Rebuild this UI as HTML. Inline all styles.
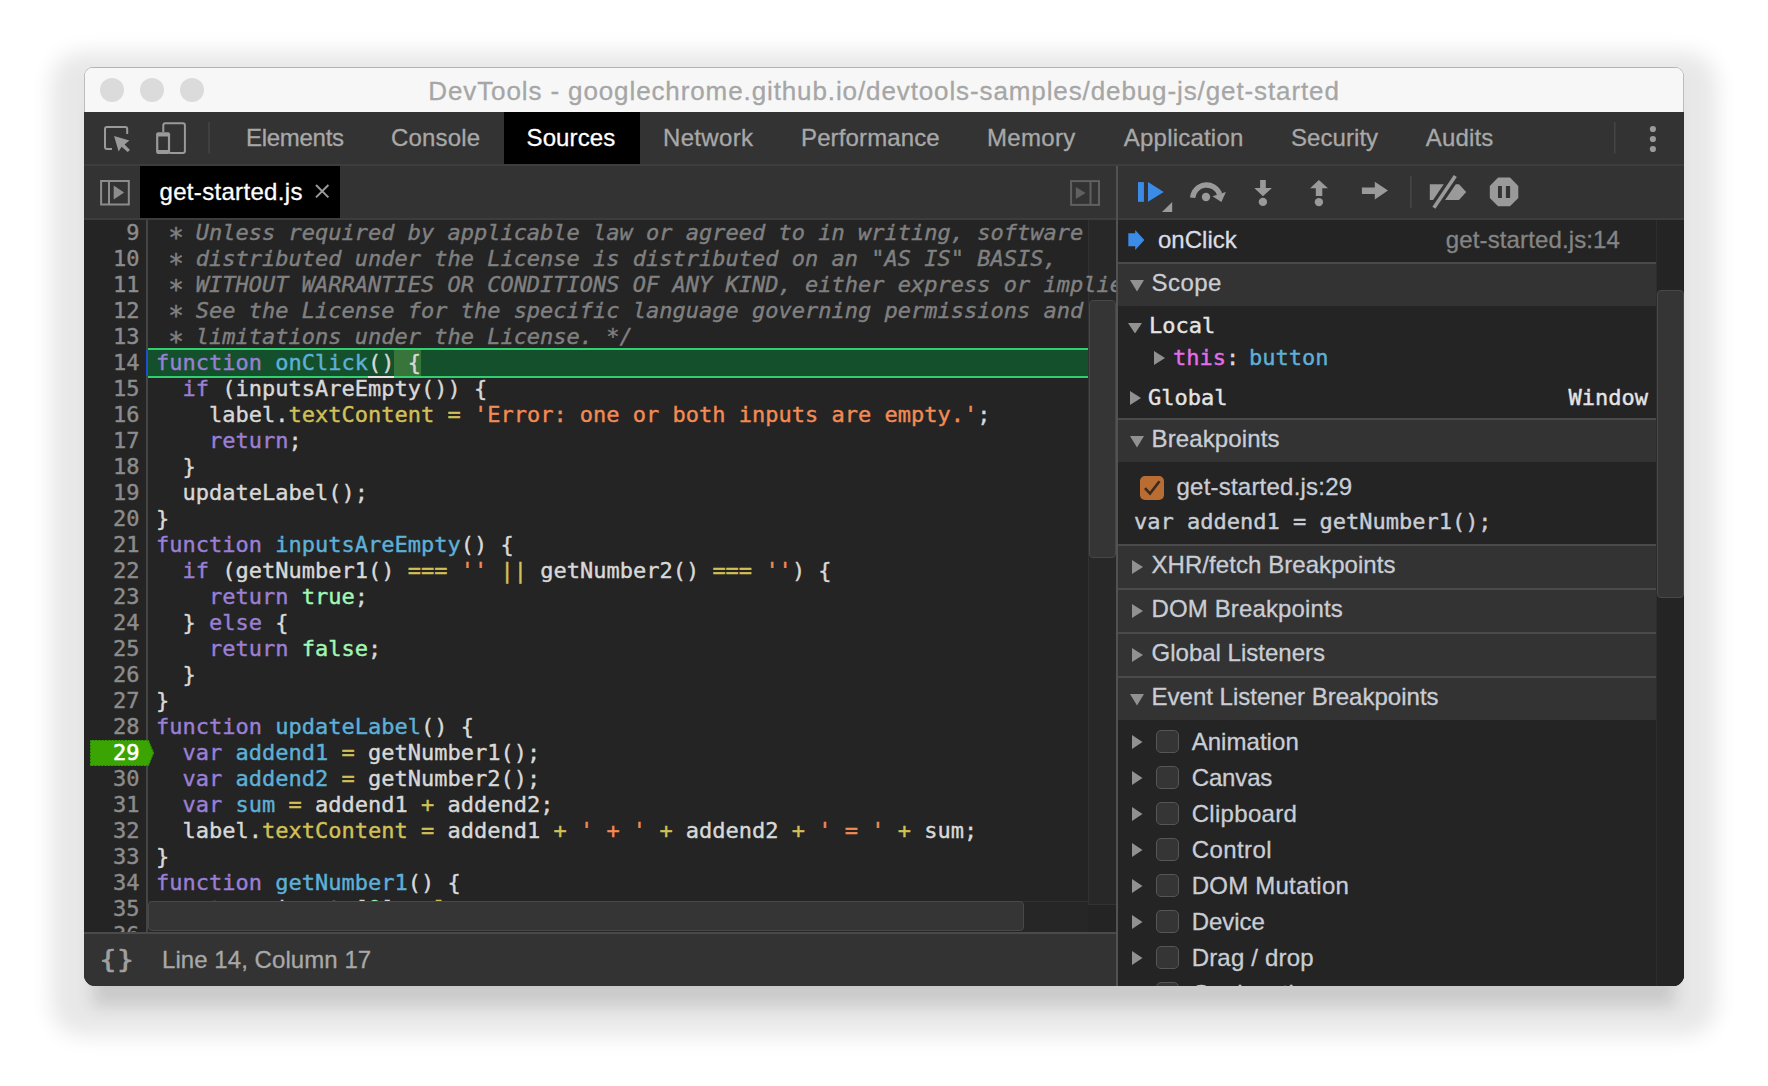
<!DOCTYPE html>
<html lang="en">
<head>
<meta charset="utf-8">
<title>DevTools - googlechrome.github.io/devtools-samples/debug-js/get-started</title>
<style>
html,body{margin:0;padding:0;}
body{width:1768px;height:1086px;background:#fff;position:relative;overflow:hidden;font-family:"Liberation Sans",sans-serif;}
#bg{position:absolute;left:0;top:0;width:1768px;height:1086px;background:#fff;}
#win{position:absolute;left:84px;top:67px;width:1600px;height:919px;border-radius:10px 10px 11px 11px;overflow:hidden;background:#242424;}
#shadow{position:absolute;left:84px;top:68px;width:1600px;height:918px;border-radius:10px;box-shadow:0 17px 21px 33px rgba(0,0,0,0.096),0 29px 16px -9.5px rgba(0,0,0,0.126);}
#in{position:absolute;left:-84px;top:-67px;width:1768px;height:1086px;}
#in div,#in span,#in svg{position:absolute;}
#in .t{white-space:pre;}
#in .t span{position:static;}
.sans{font-family:"Liberation Sans",sans-serif;font-size:24px;line-height:30px;-webkit-text-stroke:0.3px currentColor;}
.mono{font-family:"DejaVu Sans Mono","Liberation Mono",monospace;font-size:22px;line-height:26px;-webkit-text-stroke:0.4px currentColor;}
.ast{display:inline-block;transform:translate(0.4px,5.6px) scale(1.18);font-style:normal;}
/* title bar */
#title{left:84px;top:67px;width:1600px;height:45px;background:#f7f7f7;box-shadow:inset 0 1px 0 #b4b4b4,inset 1px 0 0 #bcbcbc,inset -1px 0 0 #bcbcbc;}
#title .txt{left:0;width:1600px;top:8px;text-align:center;color:#a6a6a6;font-size:26px;line-height:32px;white-space:pre;letter-spacing:0.89px;-webkit-text-stroke:0.3px #a6a6a6;}
.tl{width:24px;height:24px;border-radius:50%;background:#dbdbdb;top:11px;}
/* tab bar */
#tabs{left:84px;top:112px;width:1600px;height:52px;background:#333;}
#tabs .tab{top:0;height:52px;color:#a8a8a8;white-space:pre;line-height:52px;font-size:24px;-webkit-text-stroke:0.3px currentColor;}
#tabs .sel{background:#000;color:#fff;}
#tabline{left:84px;top:164px;width:1600px;height:2px;background:#3d3d3d;}
/* sources toolbar */
#stb{left:84px;top:166px;width:1033px;height:52px;background:#333;}
#stbline{left:84px;top:218px;width:1033px;height:2px;background:#3d3d3d;}
#ftab{left:140px;top:166px;width:200px;height:52px;background:#000;}
/* code */
#code{left:84px;top:220px;width:1033px;height:712px;background:#242424;overflow:hidden;}
#codein{left:-84px;top:-220px;width:1768px;height:1086px;}
#gutsep{left:146px;top:220px;width:2px;height:712px;background:#454545;}
.ln{left:84px;width:55.5px;text-align:right;color:#8c8c8c;height:26px;white-space:pre;}
.cl{left:156px;height:26px;white-space:pre;color:#d8d8d8;}
.cl span{position:static !important;}
.c{color:#808080;font-style:italic;}
.k{color:#9a7fd5;}
.d{color:#5db0d7;}
.p{color:#d2c057;}
.s{color:#f28b54;}
.a{color:#a1f7b5;}
#exec{left:148px;top:348px;width:940px;height:26px;background:#14502b;border-top:2px solid #31cf70;border-bottom:2px solid #31cf70;}
#exechl{left:394px;top:350px;width:26.5px;height:26px;background:#38753a;}
#execul{left:368px;top:376px;width:26px;height:2px;background:#e4e4e4;}
#execbar{left:146px;top:350px;width:2px;height:26px;background:#1d50cf;}
.bpn{color:#fff !important;-webkit-text-stroke:0.6px #fff;}
#vtrack{left:1088px;top:220px;width:28px;height:684px;background:rgba(255,255,255,0.02);border-left:1px solid rgba(255,255,255,0.05);box-sizing:border-box;}
#vthumb{left:1088.5px;top:300px;width:27px;height:258px;background:#353535;border:1.5px solid #474747;border-radius:4px;box-sizing:border-box;}
#htrack{left:148px;top:901px;width:940px;height:31px;background:#262626;border-top:1px solid #303030;box-sizing:border-box;}
#hthumb{left:148px;top:901px;width:876px;height:30px;background:#353535;border:1.5px solid #484848;border-radius:4px;box-sizing:border-box;}
#corner{left:1088px;top:904px;width:28px;height:28px;background:#242424;border-top:1px solid #333;box-sizing:border-box;}
#rtrack{left:1656px;top:220px;width:28px;height:766px;background:#242424;border-left:1px solid #2e2e2e;box-sizing:border-box;}
#rthumb{left:1656.5px;top:290px;width:27px;height:308px;background:#353535;border:1.5px solid #484848;border-radius:4px;box-sizing:border-box;}
/* status bar */
#status{left:84px;top:932px;width:1033px;height:54px;background:#333;border-top:2px solid #4a4a4a;box-sizing:border-box;}
/* right */
#rdiv{left:1116px;top:166px;width:2px;height:820px;background:#525252;}
#right{left:1118px;top:220px;width:566px;height:766px;background:#242424;overflow:hidden;}
#rightin{left:-1118px;top:-220px;width:1768px;height:1086px;}
#dtb{left:1118px;top:166px;width:566px;height:52px;background:#333;}
#dtbline{left:1118px;top:218px;width:566px;height:2px;background:#3d3d3d;}
.hdr{left:1118px;width:538px;height:42px;background:#333;}
.hline{left:1118px;width:538px;height:2px;background:#444;}
.cb{width:21px;height:21px;border:1.5px solid #565656;border-radius:5px;background:#353535;}
</style>
</head>
<body>
<div id="bg"></div>
<div id="shadow"></div>
<div id="win"><div id="in">

<!-- TITLE -->
<div id="title">
  <div class="tl" style="left:16px"></div><div class="tl" style="left:56px"></div><div class="tl" style="left:96px"></div>
  <div class="txt">DevTools - googlechrome.github.io/devtools-samples/debug-js/get-started</div>
</div>

<!-- TABS -->
<div id="tabs">
  <div class="tab" style="left:162px;letter-spacing:-0.29px">Elements</div>
  <div class="tab" style="left:307px;letter-spacing:0.18px">Console</div>
  <div class="tab sel" style="left:420px;width:136px"></div>
  <div class="tab" style="left:442.5px;letter-spacing:0.13px;color:#fff">Sources</div>
  <div class="tab" style="left:579px;letter-spacing:0.32px">Network</div>
  <div class="tab" style="left:717px;letter-spacing:0.13px">Performance</div>
  <div class="tab" style="left:903px;letter-spacing:0.34px">Memory</div>
  <div class="tab" style="left:1039.8px;letter-spacing:0.21px">Application</div>
  <div class="tab" style="left:1207px;letter-spacing:0.06px">Security</div>
  <div class="tab" style="left:1341.8px;letter-spacing:0.16px">Audits</div>
</div>
<div id="tabline"></div>

<!-- SOURCES TOOLBAR -->
<div id="stb"></div>
<div id="stbline"></div>
<div id="ftab"><div class="t sans" style="left:19.5px;top:11px;color:#fff;letter-spacing:0.32px;-webkit-text-stroke:0.3px #fff">get-started.js</div></div>

<!-- CODE -->
<div id="code"><div id="codein">
<div id="gutsep"></div>
<div id="exec"></div>
<div id="exechl"></div>
<div id="execul"></div>
<div id="execbar"></div>
<svg style="left:88px;top:738px" width="70" height="30" viewBox="88 738 70 30"><path d="M90 740H148.6L154 753L148.6 766H90Z" fill="#3aa502"/><path d="M90.5 740.5H148.3L153.5 753L148.3 765.5H90.5Z" fill="none" stroke="#1f6a0a" stroke-width="1" stroke-dasharray="1.3 2"/></svg>
<div class="ln mono" style="top:220px">9</div>
<div class="cl mono" style="top:220px"><span class="c"> <span class="ast">*</span> Unless required by applicable law or agreed to in writing, software</span></div>
<div class="ln mono" style="top:246px">10</div>
<div class="cl mono" style="top:246px"><span class="c"> <span class="ast">*</span> distributed under the License is distributed on an "AS IS" BASIS,</span></div>
<div class="ln mono" style="top:272px">11</div>
<div class="cl mono" style="top:272px"><span class="c"> <span class="ast">*</span> WITHOUT WARRANTIES OR CONDITIONS OF ANY KIND, either express or implied.</span></div>
<div class="ln mono" style="top:298px">12</div>
<div class="cl mono" style="top:298px"><span class="c"> <span class="ast">*</span> See the License for the specific language governing permissions and</span></div>
<div class="ln mono" style="top:324px">13</div>
<div class="cl mono" style="top:324px"><span class="c"> <span class="ast">*</span> limitations under the License. */</span></div>
<div class="ln mono" style="top:350px">14</div>
<div class="cl mono" style="top:350px"><span class="k">function</span> <span class="d">onClick</span>() {</div>
<div class="ln mono" style="top:376px">15</div>
<div class="cl mono" style="top:376px">  <span class="k">if</span> (inputsAreEmpty()) {</div>
<div class="ln mono" style="top:402px">16</div>
<div class="cl mono" style="top:402px">    label.<span class="p">textContent</span> <span class="p">=</span> <span class="s">'Error: one or both inputs are empty.'</span>;</div>
<div class="ln mono" style="top:428px">17</div>
<div class="cl mono" style="top:428px">    <span class="k">return</span>;</div>
<div class="ln mono" style="top:454px">18</div>
<div class="cl mono" style="top:454px">  }</div>
<div class="ln mono" style="top:480px">19</div>
<div class="cl mono" style="top:480px">  updateLabel();</div>
<div class="ln mono" style="top:506px">20</div>
<div class="cl mono" style="top:506px">}</div>
<div class="ln mono" style="top:532px">21</div>
<div class="cl mono" style="top:532px"><span class="k">function</span> <span class="d">inputsAreEmpty</span>() {</div>
<div class="ln mono" style="top:558px">22</div>
<div class="cl mono" style="top:558px">  <span class="k">if</span> (getNumber1() <span class="p">===</span> <span class="s">''</span> <span class="p">||</span> getNumber2() <span class="p">===</span> <span class="s">''</span>) {</div>
<div class="ln mono" style="top:584px">23</div>
<div class="cl mono" style="top:584px">    <span class="k">return</span> <span class="a">true</span>;</div>
<div class="ln mono" style="top:610px">24</div>
<div class="cl mono" style="top:610px">  } <span class="k">else</span> {</div>
<div class="ln mono" style="top:636px">25</div>
<div class="cl mono" style="top:636px">    <span class="k">return</span> <span class="a">false</span>;</div>
<div class="ln mono" style="top:662px">26</div>
<div class="cl mono" style="top:662px">  }</div>
<div class="ln mono" style="top:688px">27</div>
<div class="cl mono" style="top:688px">}</div>
<div class="ln mono" style="top:714px">28</div>
<div class="cl mono" style="top:714px"><span class="k">function</span> <span class="d">updateLabel</span>() {</div>
<div class="ln mono bpn" style="top:740px">29</div>
<div class="cl mono" style="top:740px">  <span class="k">var</span> <span class="d">addend1</span> <span class="p">=</span> getNumber1();</div>
<div class="ln mono" style="top:766px">30</div>
<div class="cl mono" style="top:766px">  <span class="k">var</span> <span class="d">addend2</span> <span class="p">=</span> getNumber2();</div>
<div class="ln mono" style="top:792px">31</div>
<div class="cl mono" style="top:792px">  <span class="k">var</span> <span class="d">sum</span> <span class="p">=</span> addend1 <span class="p">+</span> addend2;</div>
<div class="ln mono" style="top:818px">32</div>
<div class="cl mono" style="top:818px">  label.<span class="p">textContent</span> <span class="p">=</span> addend1 <span class="p">+</span> <span class="s">' + '</span> <span class="p">+</span> addend2 <span class="p">+</span> <span class="s">' = '</span> <span class="p">+</span> sum;</div>
<div class="ln mono" style="top:844px">33</div>
<div class="cl mono" style="top:844px">}</div>
<div class="ln mono" style="top:870px">34</div>
<div class="cl mono" style="top:870px"><span class="k">function</span> <span class="d">getNumber1</span>() {</div>
<div class="ln mono" style="top:896px">35</div>
<div class="cl mono" style="top:896px">  <span class="k">return</span> inputs[<span class="a">0</span>].<span class="p">value</span>;</div>
<div class="ln mono" style="top:922px">36</div>
<div class="cl mono" style="top:922px">}</div>
</div></div>
<div id="vtrack"></div><div id="vthumb"></div>
<div id="htrack"></div><div id="hthumb"></div><div id="corner"></div>

<!-- STATUS -->
<div id="status"><div class="t mono" style="left:15.5px;top:9.5px;color:#a0a0a0;font-size:28px;line-height:30px;letter-spacing:0.6px;-webkit-text-stroke:0.8px #a0a0a0;transform:translateY(1px) scaleY(0.91)">{}</div><div class="t sans" style="left:78px;top:11px;color:#a8a8a8;letter-spacing:0.06px">Line 14, Column 17</div></div>

<!-- RIGHT -->
<div id="dtb"></div><div id="dtbline"></div>
<div id="right"><div id="rightin">
<svg style="left:1127.5px;top:230px" width="17" height="20" viewBox="0 0 17 20"><path d="M0.3 3.2H7.2V0L16.4 10L7.2 20V16.2H0.3Z" fill="#3b8be8"/></svg>
<div class="t sans" style="left:1158px;top:224.5px;color:#d9dde4;font-size:24px;letter-spacing:0.02px;">onClick</div>
<div class="t sans" style="right:148px;top:224.5px;color:#858585;font-size:24px;letter-spacing:0.12px;">get-started.js:14</div>
<div class="hline" style="top:262px;height:2px;background:#4a4a4a"></div>
<div class="hdr" style="top:264px"></div>
<svg style="left:1130px;top:280.2px" width="14" height="11.5" viewBox="0 0 14 11.5"><path d="M0 0H14L7.0 11.5Z" fill="#919191"/></svg>
<div class="t sans" style="left:1151.5px;top:268.0px;color:#c9cdd5;font-size:24px;letter-spacing:0.45px;">Scope</div>
<svg style="left:1128px;top:322.5px" width="14" height="10.5" viewBox="0 0 14 10.5"><path d="M0 0H14L7.0 10.5Z" fill="#919191"/></svg>
<div class="t mono" style="left:1149px;top:313.0px;color:#e4e4e4;">Local</div>
<svg style="left:1154px;top:351.2px" width="11" height="14" viewBox="0 0 11 14"><path d="M0 0V14L11 7.0Z" fill="#919191"/></svg>
<div class="t mono" style="left:1173px;top:345.0px;color:#d8d8d8;"><span style="color:#e36eec">this</span>: <span style="color:#5db0d7;margin-left:-3.5px">button</span></div>
<svg style="left:1130px;top:391px" width="11" height="14" viewBox="0 0 11 14"><path d="M0 0V14L11 7.0Z" fill="#919191"/></svg>
<div class="t mono" style="left:1148px;top:385.0px;color:#e4e4e4;">Global</div>
<div class="t mono" style="right:120px;top:385.0px;color:#e4e4e4;">Window</div>
<div class="hline" style="top:418px;height:2px;background:#4a4a4a"></div>
<div class="hdr" style="top:420px"></div>
<svg style="left:1130px;top:436.2px" width="14" height="11.5" viewBox="0 0 14 11.5"><path d="M0 0H14L7.0 11.5Z" fill="#919191"/></svg>
<div class="t sans" style="left:1151.5px;top:424.0px;color:#c9cdd5;font-size:24px;letter-spacing:0.12px;">Breakpoints</div>
<svg style="left:1140px;top:476px" width="24" height="24" viewBox="0 0 24 24"><rect x="0" y="0" width="24" height="24" rx="5" fill="#b96d33"/><path d="M5 12.2L10 17.6L19.5 5.2" fill="none" stroke="#3a2a1e" stroke-width="2.6"/></svg>
<div class="t sans" style="left:1176.5px;top:472.0px;color:#c9cdd5;font-size:24px;letter-spacing:0.22px;">get-started.js:29</div>
<div class="t mono" style="left:1134px;top:509.0px;color:#c9cdd5;">var addend1 = getNumber1();</div>
<div class="hline" style="top:544px;height:2px;background:#4a4a4a"></div>
<div class="hdr" style="top:546px"></div>
<svg style="left:1132px;top:560px" width="11" height="14" viewBox="0 0 11 14"><path d="M0 0V14L11 7.0Z" fill="#919191"/></svg>
<div class="t sans" style="left:1151.5px;top:550.0px;color:#c9cdd5;font-size:24px;letter-spacing:0.06px;">XHR/fetch Breakpoints</div>
<div class="hline" style="top:588px;height:2px;background:#4a4a4a"></div>
<div class="hdr" style="top:590px"></div>
<svg style="left:1132px;top:604px" width="11" height="14" viewBox="0 0 11 14"><path d="M0 0V14L11 7.0Z" fill="#919191"/></svg>
<div class="t sans" style="left:1151.5px;top:594.0px;color:#c9cdd5;font-size:24px;letter-spacing:0.13px;">DOM Breakpoints</div>
<div class="hline" style="top:632px;height:2px;background:#4a4a4a"></div>
<div class="hdr" style="top:634px"></div>
<svg style="left:1132px;top:648px" width="11" height="14" viewBox="0 0 11 14"><path d="M0 0V14L11 7.0Z" fill="#919191"/></svg>
<div class="t sans" style="left:1151.5px;top:638.0px;color:#c9cdd5;font-size:24px;letter-spacing:0.01px;">Global Listeners</div>
<div class="hline" style="top:676px;height:2px;background:#4a4a4a"></div>
<div class="hdr" style="top:678px"></div>
<svg style="left:1130px;top:694.2px" width="14" height="11.5" viewBox="0 0 14 11.5"><path d="M0 0H14L7.0 11.5Z" fill="#919191"/></svg>
<div class="t sans" style="left:1151.5px;top:682.0px;color:#c9cdd5;font-size:24px;letter-spacing:0.01px;">Event Listener Breakpoints</div>
<svg style="left:1132px;top:735.3px" width="10.5" height="14" viewBox="0 0 10.5 14"><path d="M0 0V14L10.5 7.0Z" fill="#919191"/></svg>
<div class="cb" style="left:1156px;top:730px"></div>
<div class="t sans" style="left:1191.7px;top:726.5px;color:#c9cdd5;font-size:24px;letter-spacing:0.04px;">Animation</div>
<svg style="left:1132px;top:771.3px" width="10.5" height="14" viewBox="0 0 10.5 14"><path d="M0 0V14L10.5 7.0Z" fill="#919191"/></svg>
<div class="cb" style="left:1156px;top:766px"></div>
<div class="t sans" style="left:1191.7px;top:762.5px;color:#c9cdd5;font-size:24px;letter-spacing:-0.14px;">Canvas</div>
<svg style="left:1132px;top:807.3px" width="10.5" height="14" viewBox="0 0 10.5 14"><path d="M0 0V14L10.5 7.0Z" fill="#919191"/></svg>
<div class="cb" style="left:1156px;top:802px"></div>
<div class="t sans" style="left:1191.7px;top:798.5px;color:#c9cdd5;font-size:24px;letter-spacing:0.31px;">Clipboard</div>
<svg style="left:1132px;top:843.3px" width="10.5" height="14" viewBox="0 0 10.5 14"><path d="M0 0V14L10.5 7.0Z" fill="#919191"/></svg>
<div class="cb" style="left:1156px;top:838px"></div>
<div class="t sans" style="left:1191.7px;top:834.5px;color:#c9cdd5;font-size:24px;letter-spacing:0.43px;">Control</div>
<svg style="left:1132px;top:879.3px" width="10.5" height="14" viewBox="0 0 10.5 14"><path d="M0 0V14L10.5 7.0Z" fill="#919191"/></svg>
<div class="cb" style="left:1156px;top:874px"></div>
<div class="t sans" style="left:1191.7px;top:870.5px;color:#c9cdd5;font-size:24px;letter-spacing:0.22px;">DOM Mutation</div>
<svg style="left:1132px;top:915.3px" width="10.5" height="14" viewBox="0 0 10.5 14"><path d="M0 0V14L10.5 7.0Z" fill="#919191"/></svg>
<div class="cb" style="left:1156px;top:910px"></div>
<div class="t sans" style="left:1191.7px;top:906.5px;color:#c9cdd5;font-size:24px;letter-spacing:-0.04px;">Device</div>
<svg style="left:1132px;top:951.3px" width="10.5" height="14" viewBox="0 0 10.5 14"><path d="M0 0V14L10.5 7.0Z" fill="#919191"/></svg>
<div class="cb" style="left:1156px;top:946px"></div>
<div class="t sans" style="left:1191.7px;top:942.5px;color:#c9cdd5;font-size:24px;letter-spacing:0.18px;">Drag / drop</div>
<svg style="left:1132px;top:987.3px" width="10.5" height="14" viewBox="0 0 10.5 14"><path d="M0 0V14L10.5 7.0Z" fill="#919191"/></svg>
<div class="cb" style="left:1156px;top:982px"></div>
<div class="t sans" style="left:1191.7px;top:978.5px;color:#c9cdd5;font-size:24px;letter-spacing:0.10px;">Geolocation</div>
</div></div>
<div id="rdiv"></div>
<div id="rtrack"></div><div id="rthumb"></div>
<!--RIGHTOVER-->
<svg id="icons" style="left:0;top:0" width="1768" height="1086" viewBox="0 0 1768 1086">
<g fill="none" stroke="#9a9a9a" stroke-width="2">
<!-- inspect -->
<path d="M127.2 134V129Q127.2 127 125.2 127H107Q105 127 105 129V147Q105 149 107 149H112"/>
<!-- device tablet -->
<path d="M163.3 132V125.2Q163.3 123.2 165.3 123.2H182.9Q184.9 123.2 184.9 125.2V150.9Q184.9 152.9 182.9 152.9H169.5"/>
</g>
<g fill="#9a9a9a">
<path d="M114.1 135.9L129.4 140.4L124.6 144.6L130 149.9L127.6 152L121.6 146.7L118.6 151.5Z"/>
<rect x="156.1" y="132.3" width="14" height="21.6" rx="2"/>
<circle cx="1652.9" cy="129" r="3.1"/><circle cx="1652.9" cy="139" r="3.1"/><circle cx="1652.9" cy="149" r="3.1"/>
</g>
<rect x="158.3" y="136.5" width="9.6" height="13.5" fill="#333"/>
<rect x="208.3" y="122" width="1.4" height="31.5" fill="#474747"/>
<rect x="1614.1" y="122" width="1.4" height="31.5" fill="#474747"/>
<!-- navigator toggle -->
<g fill="none" stroke="#8c8c8c" stroke-width="2">
<rect x="101.1" y="181" width="27.7" height="23.5"/>
<path d="M109 181V204.5"/>
</g>
<path d="M113.7 185.5V199.4L124.2 192.4Z" fill="#8c8c8c"/>
<!-- close x -->
<path d="M316 185L328.4 197.4M328.4 185L316 197.4" stroke="#9a9a9a" stroke-width="2" fill="none"/>
<!-- right toggle (dim) -->
<g fill="none" stroke="#606060" stroke-width="2">
<rect x="1071.1" y="181.1" width="27.9" height="23.8"/>
<path d="M1090.5 181V205"/>
</g>
<path d="M1075.8 187V199L1085.6 193Z" fill="#606060"/>
<!-- resume -->
<g fill="#3b8ce8">
<rect x="1138" y="182.1" width="5.9" height="19.7"/>
<path d="M1148 182.1V201.8L1163.7 192Z"/>
</g>
<path d="M1172.2 202.1V211.9H1162Z" fill="#9a9a9a"/>
<!-- step over -->
<path d="M1192.65 197.8A13.9 13.9 0 0 1 1219.6 194.25" fill="none" stroke="#9a9a9a" stroke-width="5.3"/>
<g fill="#9a9a9a">
<path d="M1225.9 192.1L1221.4 202L1212.4 196.3Z"/>
<circle cx="1206" cy="197" r="4.2"/>
<!-- step into -->
<path d="M1260.1 180.1H1265.8V188H1271.9L1262.95 196.2L1254.3 188H1260.1Z"/>
<circle cx="1262.9" cy="201.9" r="4.2"/>
<!-- step out -->
<path d="M1318.9 180.1L1328 188.3H1322.3V196H1315.8V188.3H1310.1Z"/>
<circle cx="1318.9" cy="202.1" r="4.2"/>
<!-- step -->
<path d="M1361.9 187.6H1374.8V181.7L1388 190.6L1374.8 199.6V193.9H1361.9Z"/>
<!-- deactivate bps -->
<path d="M1429.8 184.2H1459L1466.2 192L1459 200H1429.8Z"/>
<!-- pause on exc -->
<path d="M1498.1 177.6H1510L1518.3 186V198L1510 206.2H1498.1L1489.8 198V186Z"/>
</g>
<path d="M1433.9 207.8L1455.3 176" stroke="#333" stroke-width="10" fill="none"/>
<path d="M1433.9 207.8L1455.3 176" stroke="#9a9a9a" stroke-width="3.6" fill="none"/>
<rect x="1498" y="186" width="3.9" height="12" fill="#333"/>
<rect x="1505.9" y="186" width="4.2" height="12" fill="#333"/>
<rect x="1410.1" y="176" width="1.4" height="31.8" fill="#4a4a4a"/>
</svg>


</div></div>
</body>
</html>
